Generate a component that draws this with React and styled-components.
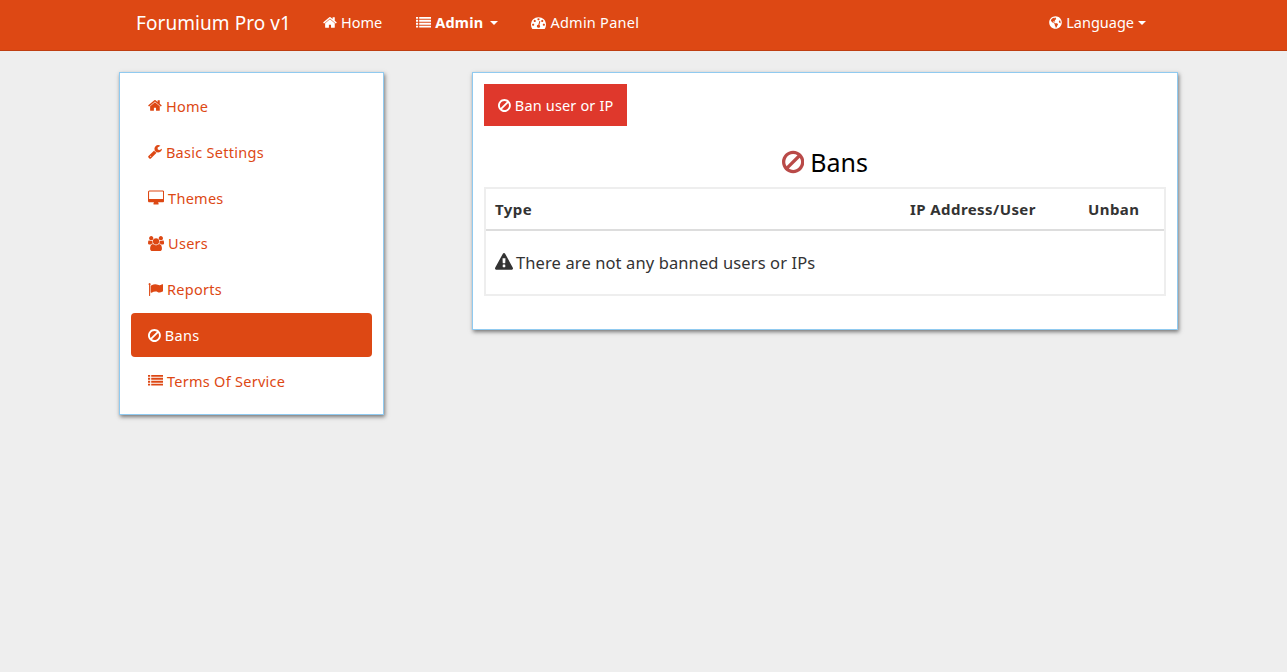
import React from 'react'
import styled, { createGlobalStyle } from 'styled-components'
import { FaGlobeAmericas } from 'react-icons/fa'

const orange = '#dd4814'
const fontStack = '"Noto Sans", "Open Sans", sans-serif'

const GlobalStyle = createGlobalStyle`
  html, body {
    margin: 0;
    background: #eeeeee;
    font-family: ${fontStack};
    font-size: 15px;
    color: #333;
  }
  * { box-sizing: border-box; }
`

const paths = {
  home: ['64 0 1664 1792', 'M1472 992v480q0 26-19 45t-45 19h-384v-384h-256v384h-384q-26 0-45-19t-19-45v-480q0-1 .5-3t.5-3l575-474 575 474q1 2 1 6zm223-69l-62 74q-8 9-21 11h-3q-13 0-21-7l-692-577-692 577q-12 8-24 7-13-2-21-11l-62-74q-8-10-7-23.5t11-21.5l719-599q32-26 76-26t76 26l244 204v-195q0-14 9-23t23-9h192q14 0 23 9t9 23v408l219 182q10 8 11 21.5t-7 23.5z'],
  ban: ['128 0 1536 1792', 'M1440 893q0-161-87-295l-754 753q137 89 297 89 111 0 211.5-43.5t173.500-116.500 116-174.500 43-212.500zm-999 299l755-754q-135-91-300-91-148 0-273 73t-198 199-73 274q0 162 89 299zm1223-299q0 157-61 300t-163.500 246-245 164-298.500 61-298.500-61-245-164-163.500-246-61-300 61-299.500 163.500-245.500 245-164 298.500-61 298.500 61 245 164 163.500 245.500 61 299.500z'],
  wrench: ['64 0 1664 1792', 'M448 1472q0-26-19-45t-45-19-45 19-19 45 19 45 45 19 45-19 19-45zm644-420l-682 682q-37 37-90 37-52 0-91-37l-106-108q-38-36-38-90 0-53 38-91l681-681q39 98 114.500 173.500t173.500 114.500zm634-435q0 39-23 106-47 134-164.500 217.500t-258.500 83.500q-185 0-316.500-131.500t-131.500-316.500 131.500-316.500 316.500-131.500q58 0 121.500 16.500t107.500 46.500q16 11 16 28t-16 28l-293 169v224l193 107q5-3 79-48.500t135.500-81 70.500-35.500q15 0 23.500 10t8.500 25z'],
  desktop: ['64 -64 1920 1792', 'M1856 992v-832q0-13-9.500-22.500t-22.500-9.500h-1600q-13 0-22.500 9.500t-9.500 22.500v832q0 13 9.500 22.500t22.500 9.500h1600q13 0 22.500-9.500t9.500-22.500zm128-832v1088q0 66-47 113t-113 47h-544q0 37 16 77.500t32 71 16 43.500q0 26-19 45t-45 19h-512q-26 0-45-19t-19-45q0-14 16-44t32-70 16-78h-544q-66 0-113-47t-47-113v-1088q0-66 47-113t113-47h1632q66 0 113 47t47 113z'],
  users: ['0 0 1920 1792', 'M593 896q-162 5-265 128h-134q-82 0-138-40.500t-56-118.500q0-353 124-353 6 0 43.500 21t97.500 42.500 119 21.500q67 0 133-23-5 37-5 66 0 139 81 256zm1071 637q0 120-73 189.500t-194 69.500h-874q-121 0-194-69.500t-73-189.500q0-53 3.500-103.500t14-109 26.500-108.500 43-97.500 62-81 85.500-53.500 111.500-20q10 0 43 21.500t73 48 107 48 135 21.500 135-21.500 107-48 73-48 43-21.500q61 0 111.500 20t85.500 53.500 62 81 43 97.500 26.500 108.500 14 109 3.500 103.500zm-1024-1277q0 106-75 181t-181 75-181-75-75-181 75-181 181-75 181 75 75 181zm704 384q0 159-112.500 271.500t-271.500 112.500-271.500-112.500-112.500-271.500 112.500-271.500 271.500-112.500 271.500 112.500 112.500 271.500zm576 225q0 78-56 118.500t-138 40.500h-134q-103-123-265-128 81-117 81-256 0-29-5-66 66 23 133 23 59 0 119-21.500t97.500-42.500 43.500-21q124 0 124 353zm-128-609q0 106-75 181t-181 75-181-75-75-181 75-181 181-75 181 75 75 181z'],
  flag: ['0 0 1792 1792', 'M320 256q0 72-64 110v1266q0 13-9.500 22.500t-22.500 9.500h-64q-13 0-22.500-9.500t-9.500-22.500v-1266q-64-38-64-110 0-53 37.500-90.500t90.500-37.500 90.500 37.500 37.500 90.500zm1472 64v763q0 25-12.500 38.500t-39.500 27.500q-215 116-369 116-61 0-123.500-22t-108.500-48-115.500-48-142.500-22q-192 0-464 146-17 9-33 9-26 0-45-19t-19-45v-742q0-32 31-55 21-14 79-43 236-120 421-120 107 0 200 29t219 88q38 19 88 19 54 0 117.500-21t110-47 88-47 54.500-21q26 0 45 19t19 45z'],
  list: ['0 0 1792 1792', 'M0 224h256v224h-256zM384 224h1408v224h-1408zM0 576h256v224h-256zM384 576h1408v224h-1408zM0 928h256v224h-256zM384 928h1408v224h-1408zM0 1280h256v224h-256zM384 1280h1408v224h-1408z'],
  dashboard: ['0 0 1792 1792', 'M384 1152q0-53-37.500-90.500t-90.500-37.500-90.500 37.500-37.500 90.500 37.500 90.500 90.500 37.500 90.500-37.500 37.500-90.500zm192-448q0-53-37.500-90.500t-90.500-37.500-90.500 37.500-37.500 90.500 37.500 90.500 90.500 37.500 90.500-37.500 37.500-90.500zm428 481l101-382q6-26-7.500-48.500t-38.500-29.500-48 6.500-30 39.500l-101 382q-60 5-107 43.500t-63 98.500q-20 77 20 146t117 89 146-20 89-117q16-60-6-117t-72-91zm660-33q0-53-37.500-90.500t-90.500-37.500-90.500 37.500-37.500 90.500 37.500 90.500 90.500 37.500 90.500-37.500 37.500-90.500zm-640-640q0-53-37.500-90.500t-90.500-37.500-90.500 37.500-37.500 90.500 37.500 90.500 90.500 37.500 90.500-37.500 37.500-90.500zm448 192q0-53-37.500-90.500t-90.500-37.500-90.500 37.500-37.500 90.500 37.500 90.500 90.500 37.500 90.500-37.500 37.500-90.500zm320 448q0 261-141 483-19 29-54 29h-1402q-35 0-54-29-141-221-141-483 0-182 71-348t191-286 286-191 348-71 348 71 286 191 191 286 71 348z'],
  warning: ['0 0 1792 1792', 'M1024 1375v-190q0-14-9.500-23.500t-22.500-9.500h-192q-13 0-22.500 9.500t-9.500 23.500v190q0 14 9.500 23.500t22.500 9.500h192q13 0 22.500-9.500t9.500-23.500zm-2-374l18-459q0-12-10-19-13-11-24-11h-220q-11 0-24 11-10 7-10 21l17 457q0 10 10 16.500t24 6.500h185q14 0 23.500-6.500t10.500-16.500zm-14-934l768 1408q35 63-2 126-17 29-46.500 46t-63.500 17h-1536q-34 0-63.500-17t-46.500-46q-37-63-2-126l768-1408q17-31 47-49t65-18 65 18 47 49z'],
}

const Svg = styled.svg`
  height: ${(p) => p.$size}px;
  width: auto;
  flex: none;
  fill: currentColor;
  vertical-align: -2px;
`

const Icon = ({ name, size = 15, color }) => (
  <Svg viewBox={paths[name][0]} $size={size} style={color ? { color } : undefined}>
    <path d={paths[name][1]} />
  </Svg>
)

const Navbar = styled.header`
  height: 51px;
  background: ${orange};
  border-bottom: 1px solid #bf3e11;
  padding: 0 141px 5px 136px;
  display: flex;
  align-items: center;
  color: #fff;
`

const Brand = styled.div`
  font-size: 19px;
  letter-spacing: 0.07px;
  width: 187px;
  white-space: nowrap;
`

const NavItem = styled.div`
  display: flex;
  align-items: center;
  gap: 4px;
  font-size: 14.5px;
  letter-spacing: ${(p) => p.$spacing || 0}px;
  font-weight: ${(p) => (p.$bold ? 700 : 400)};
  margin: 0 ${(p) => p.$gap || 0}px 2px ${(p) => (p.$pushRight ? 'auto' : `${p.$lead || 0}px`)};
  white-space: nowrap;

  svg {
    margin-top: 2px;
  }
`

const Caret = styled.span`
  width: 0;
  height: 0;
  margin-left: ${(p) => p.$offset}px;
  margin-top: 2px;
  border-top: 4px solid #fff;
  border-left: 4px solid transparent;
  border-right: 4px solid transparent;
`

const Page = styled.main`
  display: flex;
  align-items: flex-start;
  gap: 88px;
  min-height: calc(100vh - 51px);
  padding: 21px 0 0 119px;
`

const Panel = styled.section`
  width: ${(p) => p.$width}px;
  background: #fff;
  border: 1px solid #90caf0;
  box-shadow: 1px 2px 4px rgba(0, 0, 0, 0.5);
`

const SideNav = styled.nav`
  display: flex;
  flex-direction: column;
  gap: 2px;
  padding: 11px 11px 11px;
`

const SideLink = styled.a`
  height: 43.83px;
  padding: 0 17px;
  display: flex;
  align-items: center;
  gap: 4px;
  font-size: 14.5px;
  letter-spacing: 0.27px;
  border-radius: 4px;
  color: ${(p) => (p.$active ? '#fff' : orange)};
  background: ${(p) => (p.$active ? orange : 'transparent')};
`

const MainBody = styled.div`
  padding: 11px 11px 33px;
`

const BanButton = styled.button`
  display: flex;
  align-items: center;
  gap: 4px;
  height: 42px;
  width: 143px;
  padding: 0 14px;
  border: 0;
  background: #df382c;
  color: #fff;
  font-family: ${fontStack};
  font-size: 14.5px;
  letter-spacing: 0.16px;
  white-space: nowrap;
`

const Heading = styled.h2`
  display: flex;
  justify-content: center;
  align-items: center;
  gap: 6px;
  height: 61px;
  margin: 0;
  padding-top: 10px;
  font-size: 25px;
  font-weight: 400;
  color: #000;
`

const Table = styled.table`
  width: 682px;
  table-layout: fixed;
  border-collapse: separate;
  border-spacing: 0;
  border: 2px solid #eeeeee;
`

const Th = styled.th`
  height: 42px;
  padding: 0 8px 0 9px;
  text-align: left;
  font-size: 15px;
  letter-spacing: 0.42px;
  font-weight: 700;
  color: #333;
  border-bottom: 2px solid #dddddd;
  white-space: nowrap;
`

const Message = styled.td`
  height: 63px;
  padding: 0 9px;
  font-size: 16.5px;
  letter-spacing: 0.11px;
  color: #333;
  white-space: nowrap;

  svg {
    margin-right: 3px;
    vertical-align: -2px;
  }
`

const sideItems = [
  { icon: 'home', label: 'Home' },
  { icon: 'wrench', label: 'Basic Settings' },
  { icon: 'desktop', label: 'Themes' },
  { icon: 'users', label: 'Users' },
  { icon: 'flag', label: 'Reports' },
  { icon: 'ban', label: 'Bans', active: true },
  { icon: 'list', label: 'Terms Of Service' },
]

export default function App() {
  return (
    <>
      <GlobalStyle />
      <Navbar>
        <Brand>Forumium Pro v1</Brand>
        <NavItem $gap={33}><Icon name="home" />Home</NavItem>
        <NavItem $gap={33} $lead={1} $bold $spacing={0.22}><Icon name="list" />Admin<Caret $offset={3} /></NavItem>
        <NavItem $spacing={0.25}><Icon name="dashboard" />Admin Panel</NavItem>
        <NavItem $pushRight>
          <FaGlobeAmericas size={13} />Language<Caret $offset={0} />
        </NavItem>
      </Navbar>
      <Page>
        <Panel $width={265}>
          <SideNav>
            {sideItems.map((item) => (
              <SideLink key={item.label} $active={item.active}>
                <Icon name={item.icon} />
                {item.label}
              </SideLink>
            ))}
          </SideNav>
        </Panel>
        <Panel $width={706}>
          <MainBody>
            <BanButton><Icon name="ban" />Ban user or IP</BanButton>
            <Heading><Icon name="ban" size={26} color="#b94a48" />Bans</Heading>
            <Table>
              <colgroup>
                <col style={{ width: 415 }} />
                <col style={{ width: 178 }} />
                <col />
              </colgroup>
              <thead>
                <tr>
                  <Th>Type</Th>
                  <Th>IP Address/User</Th>
                  <Th>Unban</Th>
                </tr>
              </thead>
              <tbody>
                <tr>
                  <Message colSpan={3}><Icon name="warning" size={18} />There are not any banned users or IPs</Message>
                </tr>
              </tbody>
            </Table>
          </MainBody>
        </Panel>
      </Page>
    </>
  )
}
